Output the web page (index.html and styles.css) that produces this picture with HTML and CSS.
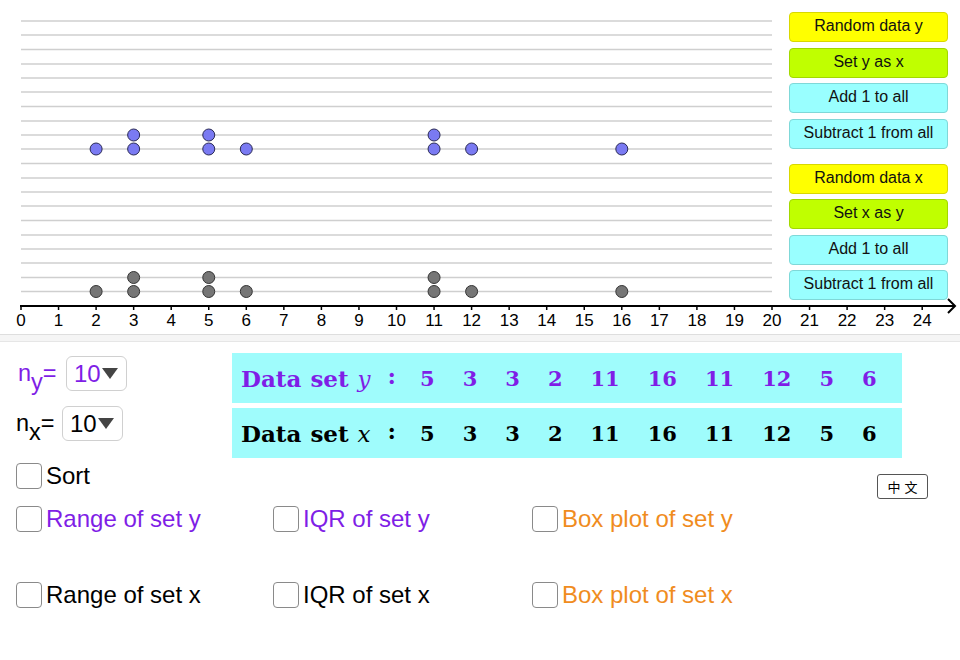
FILE: index.html
```html
<!DOCTYPE html>
<html lang="en">
<head>
    <meta charset="UTF-8">
    <title>Dot plots of data sets x and y</title>
    <link rel="stylesheet" href="styles.css">
</head>
<body>

<div class="applet">
    <div class="graph">
        <svg class="plot" width="960" height="334" viewBox="0 0 960 334">
            <!-- grid lines -->
            <g stroke="#cfcfcf" stroke-width="1.5">
                <line x1="21" y1="21" x2="772" y2="21"/>
                <line x1="21" y1="35" x2="772" y2="35"/>
                <line x1="21" y1="49.5" x2="772" y2="49.5"/>
                <line x1="21" y1="64" x2="772" y2="64"/>
                <line x1="21" y1="78" x2="772" y2="78"/>
                <line x1="21" y1="92" x2="772" y2="92"/>
                <line x1="21" y1="106.5" x2="772" y2="106.5"/>
                <line x1="21" y1="121" x2="772" y2="121"/>
                <line x1="21" y1="135" x2="772" y2="135"/>
                <line x1="21" y1="149" x2="772" y2="149"/>
                <line x1="21" y1="163.5" x2="772" y2="163.5"/>
                <line x1="21" y1="178" x2="772" y2="178"/>
                <line x1="21" y1="192" x2="772" y2="192"/>
                <line x1="21" y1="206" x2="772" y2="206"/>
                <line x1="21" y1="220.5" x2="772" y2="220.5"/>
                <line x1="21" y1="235" x2="772" y2="235"/>
                <line x1="21" y1="249" x2="772" y2="249"/>
                <line x1="21" y1="263" x2="772" y2="263"/>
                <line x1="21" y1="277.5" x2="772" y2="277.5"/>
                <line x1="21" y1="291.5" x2="772" y2="291.5"/>
            </g>

            <!-- axis -->
            <line x1="20" y1="306" x2="955" y2="306" stroke="#000" stroke-width="2"/>
            <polyline points="948,299 955,306 948,313" fill="none" stroke="#000" stroke-width="2"/>
            <g stroke="#000" stroke-width="1.5" id="ticks"></g>
            <g class="tick-labels" id="labels"></g>

            <!-- set y -->
            <g fill="#7a7af2" stroke="#2a2a55" stroke-width="1">
                <circle cx="96.1" cy="149" r="6"/>
                <circle cx="133.65" cy="149" r="6"/>
                <circle cx="133.65" cy="135" r="6"/>
                <circle cx="208.75" cy="149" r="6"/>
                <circle cx="208.75" cy="135" r="6"/>
                <circle cx="246.3" cy="149" r="6"/>
                <circle cx="434.05" cy="149" r="6"/>
                <circle cx="434.05" cy="135" r="6"/>
                <circle cx="471.6" cy="149" r="6"/>
                <circle cx="621.8" cy="149" r="6"/>
            </g>

            <!-- set x -->
            <g fill="#767676" stroke="#333" stroke-width="1">
                <circle cx="96.1" cy="291.5" r="6"/>
                <circle cx="133.65" cy="291.5" r="6"/>
                <circle cx="133.65" cy="277.5" r="6"/>
                <circle cx="208.75" cy="291.5" r="6"/>
                <circle cx="208.75" cy="277.5" r="6"/>
                <circle cx="246.3" cy="291.5" r="6"/>
                <circle cx="434.05" cy="291.5" r="6"/>
                <circle cx="434.05" cy="277.5" r="6"/>
                <circle cx="471.6" cy="291.5" r="6"/>
                <circle cx="621.8" cy="291.5" r="6"/>
            </g>
        </svg>

        <div class="buttons">
            <div class="btn-group">
                <button class="btn yellow">Random data y</button>
                <button class="btn green">Set y as x</button>
                <button class="btn cyan">Add 1 to all</button>
                <button class="btn cyan">Subtract 1 from all</button>
            </div>
            <div class="btn-group">
                <button class="btn yellow">Random data x</button>
                <button class="btn green">Set x as y</button>
                <button class="btn cyan">Add 1 to all</button>
                <button class="btn cyan">Subtract 1 from all</button>
            </div>
        </div>
    </div>

    <div class="divider"></div>

    <div class="lower">
        <div class="top-row">
            <div class="sizes">
                <div class="size-row purple">
                    <span class="size-label">n<sub>y</sub>=</span>
                    <span class="dropdown">10<svg width="16" height="11" viewBox="0 0 16 11"><path d="M0 0 L16 0 L8 11 Z" fill="#444"/></svg></span>
                </div>
                <div class="size-row">
                    <span class="size-label">n<sub>x</sub>=</span>
                    <span class="dropdown">10<svg width="16" height="11" viewBox="0 0 16 11"><path d="M0 0 L16 0 L8 11 Z" fill="#444"/></svg></span>
                </div>
            </div>
            <div class="sets">
                <div class="set-panel purple">
                    <span class="set-label">Data set<i>y</i><span class="colon">:</span></span>
                    <span class="nums"><b>5</b><b>3</b><b>3</b><b>2</b><b>11</b><b>16</b><b>11</b><b>12</b><b>5</b><b>6</b></span>
                </div>
                <div class="set-panel">
                    <span class="set-label">Data set<i>x</i><span class="colon">:</span></span>
                    <span class="nums"><b>5</b><b>3</b><b>3</b><b>2</b><b>11</b><b>16</b><b>11</b><b>12</b><b>5</b><b>6</b></span>
                </div>
            </div>
        </div>

        <div class="sort-row">
            <label class="check"><span class="box"></span>Sort</label>
            <button class="lang">中文</button>
        </div>

        <div class="options">
            <label class="check purple"><span class="box"></span>Range of set y</label>
            <label class="check purple"><span class="box"></span>IQR of set y</label>
            <label class="check orange"><span class="box"></span>Box plot of set y</label>
            <label class="check"><span class="box"></span>Range of set x</label>
            <label class="check"><span class="box"></span>IQR of set x</label>
            <label class="check orange"><span class="box"></span>Box plot of set x</label>
        </div>
    </div>
</div>

<script>
// axis ticks and numbers 0..24
const ticks = document.getElementById("ticks");
const labels = document.getElementById("labels");
const ns = "http://www.w3.org/2000/svg";
for (let v = 0; v <= 24; v++) {
    const x = 21 + v * 37.55;
    const t = document.createElementNS(ns, "line");
    t.setAttribute("x1", x); t.setAttribute("x2", x);
    t.setAttribute("y1", 306); t.setAttribute("y2", 310);
    ticks.appendChild(t);
    const l = document.createElementNS(ns, "text");
    l.setAttribute("x", x); l.setAttribute("y", 326);
    l.setAttribute("text-anchor", "middle");
    l.textContent = v;
    labels.appendChild(l);
}
</script>

</body>
</html>
```

FILE: styles.css
```css
body {
    margin: 0;
    font-family: "Liberation Sans", Arial, sans-serif;
    background-color: #fff;
    color: #000;
}
.applet {
    width: 960px;
    height: 660px;
    overflow: hidden;
}
.graph {
    position: relative;
    height: 334px;
}
.plot {
    display: block;
}
.tick-labels {
    font-family: "Liberation Sans", Arial, sans-serif;
    font-size: 17px;
    fill: #000;
}
.buttons {
    position: absolute;
    top: 12px;
    left: 789px;
    display: flex;
    flex-direction: column;
    gap: 15px;
}
.btn-group {
    display: flex;
    flex-direction: column;
    gap: 5.5px;
}
.btn {
    width: 159px;
    height: 30px;
    padding: 0 0 2px;
    font-family: "Liberation Sans", Arial, sans-serif;
    font-size: 16px;
    color: #111;
    border-radius: 4px;
    border: 1px solid;
}
.yellow {
    background-color: #ffff00;
    border-color: #d8d800;
}
.green {
    background-color: #c0ff00;
    border-color: #a2d800;
}
.cyan {
    background-color: #99ffff;
    border-color: #7fd8d8;
}
.divider {
    height: 6px;
    background-color: #f5f5f5;
    border-top: 1px solid #dedede;
    border-bottom: 1px solid #e6e6e6;
}
.lower {
    padding-top: 11px;
}
.top-row {
    display: flex;
}
.sizes {
    width: 232px;
    box-sizing: border-box;
    padding: 3px 0 0 16px;
    display: flex;
    flex-direction: column;
    gap: 15px;
}
.size-row {
    display: flex;
    align-items: center;
    height: 35px;
    font-size: 23.5px;
}
.size-label {
    width: 48px;
    padding-left: 2px;
}
.size-row + .size-row .size-label {
    width: 46px;
    padding-left: 0;
}
.size-label sub {
    font-size: 23.5px;
    vertical-align: -9px;
    line-height: 0;
}
.dropdown {
    display: flex;
    align-items: center;
    gap: 1px;
    box-sizing: border-box;
    width: 61px;
    height: 35px;
    padding-left: 7px;
    border: 1px solid #d0d0d0;
    border-radius: 6px;
    font-size: 24px;
}
.sets {
    display: flex;
    flex-direction: column;
    gap: 5px;
}
.set-panel {
    display: flex;
    align-items: center;
    width: 670px;
    height: 50px;
    box-sizing: border-box;
    padding-left: 9px;
    background-color: #9ffcfc;
    font-family: "DejaVu Serif", serif;
    font-weight: bold;
    font-size: 21px;
}
.set-label {
    display: flex;
    align-items: baseline;
    width: 179px;
    font-size: 23px;
    word-spacing: 1px;
}
.set-label i {
    font-weight: normal;
    font-style: italic;
    padding-left: 9px;
}
.colon {
    padding-left: 17px;
    position: relative;
    top: -3px;
}
.nums {
    display: flex;
    gap: 28px;
    font-size: 21px;
}
.purple {
    color: #7f1ee6;
}
.orange {
    color: #f08c1e;
}
.sort-row {
    display: flex;
    align-items: flex-start;
    height: 27px;
    margin-top: 4px;
    padding-left: 16px;
    padding-right: 32px;
}
.check {
    display: flex;
    align-items: center;
    gap: 4px;
    font-size: 24px;
    height: 27px;
}
.box {
    width: 26px;
    height: 26px;
    box-sizing: border-box;
    border: 1.5px solid #8a8a8a;
    border-radius: 4px;
    background-color: #fff;
}
.lang {
    margin-left: auto;
    margin-top: 12px;
    width: 51px;
    height: 25px;
    padding: 0;
    background-color: #fff;
    border: 1.5px solid #555;
    border-radius: 3px;
    font-family: "Noto Sans CJK TC", "Noto Sans CJK SC", serif;
    font-size: 13px;
    letter-spacing: 4px;
    text-indent: 4px;
}
.options {
    display: grid;
    grid-template-columns: 257px 259px auto;
    grid-auto-rows: 27px;
    row-gap: 49px;
    margin-top: 16px;
    padding-left: 16px;
}
```
